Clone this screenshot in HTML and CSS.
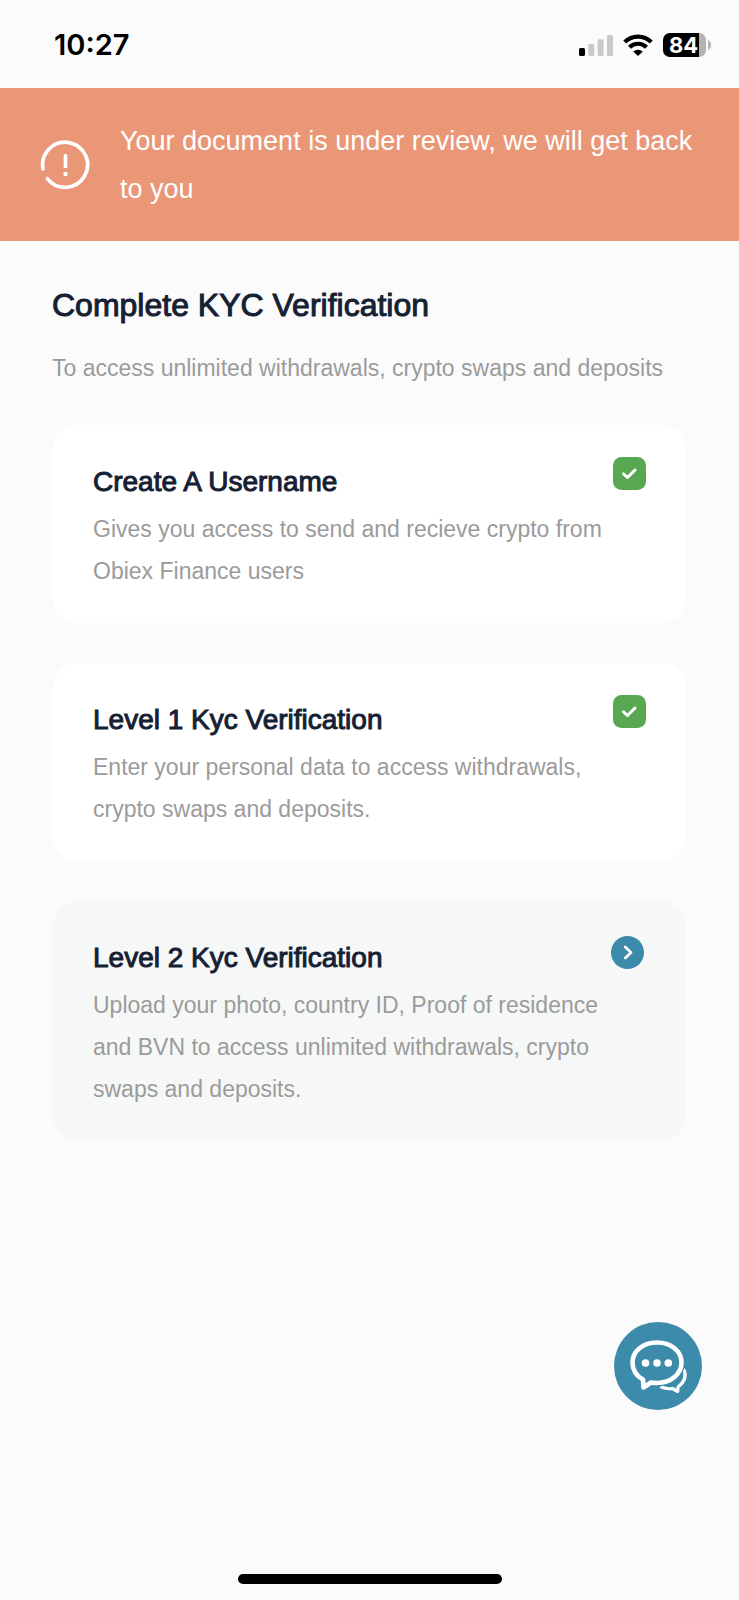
FILE: index.html
```html
<!DOCTYPE html>
<html lang="en">
<head>
<meta charset="utf-8">
<meta name="viewport" content="width=device-width, initial-scale=1">
<title>KYC Verification</title>
<link rel="stylesheet" href="styles.css">
</head>
<body>
<header class="status">
  <time class="status-time">10:27</time>
  <div class="status-icons">
    <svg class="signal" width="34" height="22" viewBox="0 0 34 22" aria-hidden="true">
      <rect x="0" y="14" width="6" height="8" rx="1.5" fill="#000"/>
      <rect x="9.300" y="10" width="6" height="12" rx="1.500" fill="#c9c9c9"/>
      <rect x="18.600" y="5.300" width="6" height="16.700" rx="1.500" fill="#c9c9c9"/>
      <rect x="28" y="1" width="6" height="21" rx="1.500" fill="#c9c9c9"/>
    </svg>
    <svg class="wifi" width="30" height="22" viewBox="0 0 30 22" aria-hidden="true">
      <g fill="none" stroke="#000" stroke-width="4.200">
        <path d="M1.700 8A19 19 0 0 1 28.300 8"/>
        <path d="M6.500 13.300A12 12 0 0 1 23.500 13.300"/>
      </g>
      <path d="M10.200 17.600A7 7 0 0 1 19.800 17.600L15 22Z" fill="#000"/>
    </svg>
    <div class="battery"><span class="battery-level">84</span></div>
    <svg class="battery-cap" width="3" height="10" viewBox="0 0 3 10" aria-hidden="true"><path d="M0 0Q3 1.500 3 5T0 10Z" fill="#b3b3b3"/></svg>
  </div>
</header>

<div class="banner" role="status">
  <svg class="banner-icon" width="50" height="50" viewBox="0 0 50 50" fill="none" stroke="#fff" stroke-linecap="round" aria-hidden="true">
    <path d="M3 29A22.500 22.500 0 1 1 7.500 38.800" stroke-width="3.700"/>
    <path d="M25.500 15.500V26.500" stroke-width="3.700"/>
    <circle cx="25.500" cy="34" r="2.200" fill="#fff" stroke="none"/>
  </svg>
  <p class="banner-text">Your document is under review, we will get back to you</p>
</div>

<main class="content">
  <h1 class="title">Complete KYC Verification</h1>
  <p class="subtitle">To access unlimited withdrawals, crypto swaps and deposits</p>

  <div class="cards">
    <section class="card">
      <div class="card-body">
        <h2 class="card-title">Create A Username</h2>
        <p class="card-text">Gives you access to send and recieve crypto from Obiex Finance users</p>
      </div>
      <svg class="check" width="33" height="33" viewBox="0 0 33 33" role="img" aria-label="Completed"><rect width="33" height="33" rx="8.500" fill="#57a851"/><path d="M10.500 16.800L14.500 20.500L22 13" fill="none" stroke="#fff" stroke-width="3" stroke-linecap="round" stroke-linejoin="round"/></svg>
    </section>
    <section class="card">
      <div class="card-body">
        <h2 class="card-title">Level 1 Kyc Verification</h2>
        <p class="card-text">Enter your personal data to access withdrawals, crypto swaps and deposits.</p>
      </div>
      <svg class="check" width="33" height="33" viewBox="0 0 33 33" role="img" aria-label="Completed"><rect width="33" height="33" rx="8.500" fill="#57a851"/><path d="M10.500 16.800L14.500 20.500L22 13" fill="none" stroke="#fff" stroke-width="3" stroke-linecap="round" stroke-linejoin="round"/></svg>
    </section>
    <section class="card card-active">
      <div class="card-body">
        <h2 class="card-title">Level 2 Kyc Verification</h2>
        <p class="card-text">Upload your photo, country ID, Proof of residence and BVN to access unlimited withdrawals, crypto swaps and deposits.</p>
      </div>
      <a class="go" href="#level-2" aria-label="Start Level 2 Kyc Verification">
        <svg width="33" height="33" viewBox="0 0 33 33" aria-hidden="true"><circle cx="16.500" cy="16.500" r="16.500" fill="#3d8bab"/><path d="M14.300 11L20 16.500L14.300 22" fill="none" stroke="#fff" stroke-width="2.700" stroke-linecap="round" stroke-linejoin="round"/></svg>
      </a>
    </section>
  </div>
</main>

<button class="chat" type="button" aria-label="Open chat">
  <svg width="88" height="88" viewBox="0 0 88 88" aria-hidden="true">
    <path d="M69 48.500C74 56 70 62 64 65.500L64.300 70L58.500 66.800Q53 67.800 47 64.800Q64 62 69 48.500Z" fill="#3d8bab"/>
    <path d="M69.500 47Q74.500 57 64 65L63.700 69.500L58.500 66.500Q52 67.500 46.500 64.500" fill="none" stroke="#fff" stroke-width="3.200" stroke-linejoin="round"/>
    <path d="M43 20.500C29 20.500 18.500 29 18.500 40.500C18.500 48 22.500 54 29 57.500L29.500 65.500L37 60.500Q40 61 43 61C57 61 67.500 52 67.500 40.500S57 20.500 43 20.500Z" fill="#3d8bab" stroke="#3d8bab" stroke-width="7"/>
    <path d="M43 20.500C29 20.500 18.500 29 18.500 40.500C18.500 48 22.500 54 29 57.500L29.500 65.500L37 60.500Q40 61 43 61C57 61 67.500 52 67.500 40.500S57 20.500 43 20.500Z" fill="#3d8bab" stroke="#fff" stroke-width="4.600" stroke-linejoin="round"/>
    <g fill="#fff"><circle cx="31.500" cy="41" r="3.800"/><circle cx="43" cy="41" r="3.800"/><circle cx="54.300" cy="41" r="3.800"/></g>
  </svg>
</button>
<div class="home-bar"></div>
</body>
</html>
```

FILE: styles.css
```css
* {
  box-sizing: border-box;
}

body {
  position: relative;
  display: flex;
  flex-direction: column;
  min-height: 100vh;
  margin: 0;
  background: #fbfbfb;
  color: #162033;
  font-family: "Liberation Sans", Arial, sans-serif;
}

h1, h2, p {
  margin: 0;
  font-weight: 400;
}

.status {
  display: flex;
  align-items: center;
  justify-content: space-between;
  height: 88px;
  padding: 2px 28px 0 54px;
}

.status-time {
  color: #000;
  font: 600 29px/32px Inter, sans-serif;
}

.status-icons {
  display: flex;
  align-items: center;
}

.wifi {
  margin: 0 10px;
}

.battery {
  width: 43px;
  height: 24px;
  margin-right: 2px;
  overflow: hidden;
  border-radius: 7px;
  background: #b3b3b3;
}

.battery-level {
  display: block;
  width: 84%;
  padding-left: 6px;
  background: #000;
  color: #fff;
  font: 700 22px/24px Inter, sans-serif;
}

.banner {
  display: flex;
  align-items: center;
  gap: 30px;
  padding: 29px 40px 28px;
  background: #e99776;
  color: #fff;
}

.banner-icon {
  flex: none;
}

.banner-text {
  font-size: 27px;
  line-height: 48px;
}

.content {
  padding: 43px 52px 0;
}

.title {
  font-size: 32px;
  line-height: 42px;
  -webkit-text-stroke: 1px;
}

.subtitle {
  margin-top: 21px;
  color: #9b9b9b;
  font-size: 23px;
  line-height: 42px;
}

.cards {
  display: grid;
  gap: 40px;
  margin: 36px 1px 0;
}

.card {
  display: flex;
  align-items: flex-start;
  justify-content: space-between;
  padding: 32px 40px 31px;
  border-radius: 24px;
  background: #fff;
}

.card-active {
  background: #f5f8f7;
}

.card-body {
  max-width: 524px;
  padding-top: 4px;
}

.card-title {
  font-size: 28px;
  line-height: 42px;
  -webkit-text-stroke: 1px;
}

.card-text {
  margin-top: 5px;
  color: #9b9b9b;
  font-size: 23px;
  line-height: 42px;
}

.check,
.go {
  flex: none;
  margin-left: -40px;
}

.go {
  display: flex;
  margin-top: 3px;
  margin-right: 2px;
}

.chat {
  position: absolute;
  right: 37px;
  bottom: 190px;
  display: flex;
  padding: 0;
  border: 0;
  border-radius: 50%;
  background: #3d8bab;
}

.home-bar {
  width: 264px;
  height: 10px;
  margin: auto auto 16px;
  border-radius: 5px;
  background: #000;
}
```
